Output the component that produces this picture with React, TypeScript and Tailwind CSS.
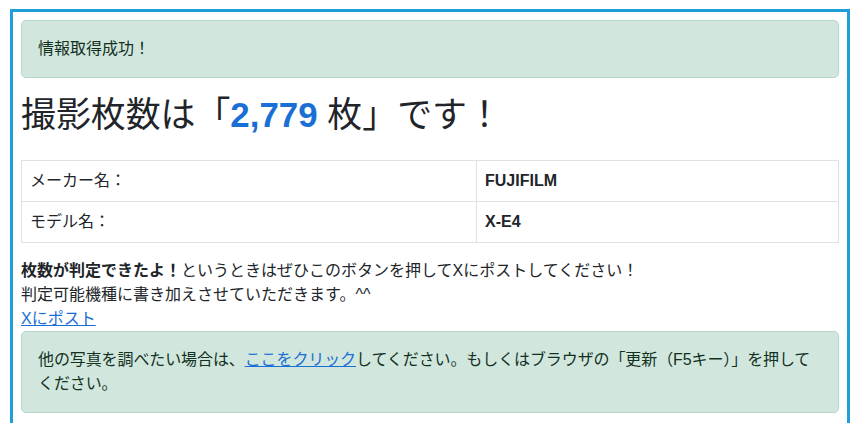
import React from "react";

export default function App() {
  return (
    <div
      className="min-h-screen bg-white pt-[9px] text-[16px] leading-[24px] text-[#212529]"
      style={{ fontFamily: '"Liberation Sans", "Noto Sans CJK JP", sans-serif' }}
    >
      <div className="ml-[10px] w-[840px] min-h-[430px] border-[3px] border-[#1f9fd8] px-[8px] pt-[8px]">
        <div className="mb-[16px] rounded-[5px] border border-[#b3d8c6] bg-[#d1e7dd] px-[16px] py-[16px] text-[#14301f]">
          情報取得成功！
        </div>
        <h1 className="mb-[24px] text-[34.9px] font-normal leading-[42px] text-[#212529]">
          撮影枚数は「<span className="font-bold text-[#1a6fd6]">2,779</span> 枚」です！
        </h1>
        <table className="mb-[16px] w-full border-collapse border border-[#dee2e6]">
          <tbody>
            <tr>
              <td className="w-[455px] border border-[#dee2e6] px-[8px] py-[8px]">メーカー名：</td>
              <td className="border border-[#dee2e6] px-[8px] py-[8px] font-bold">FUJIFILM</td>
            </tr>
            <tr>
              <td className="w-[455px] border border-[#dee2e6] px-[8px] py-[8px]">モデル名：</td>
              <td className="border border-[#dee2e6] px-[8px] py-[8px] font-bold">X-E4</td>
            </tr>
          </tbody>
        </table>
        <p>
          <b className="font-bold">枚数が判定できたよ！</b>というときはぜひこのボタンを押してXにポストしてください！
          <br />
          判定可能機種に書き加えさせていただきます。^^
        </p>
        <div>
          <a href="#" className="text-[#1a6fd6] underline">
            Xにポスト
          </a>
        </div>
        <div className="rounded-[5px] border border-[#b3d8c6] bg-[#d1e7dd] px-[16px] py-[16px] tracking-[-0.1px] text-[#14301f]">
          他の写真を調べたい場合は、
          <a href="#" className="text-[#1a6fd6] underline">
            ここをクリック
          </a>
          してください。もしくはブラウザの「更新（F5キー）」を押してください。
        </div>
      </div>
    </div>
  );
}
